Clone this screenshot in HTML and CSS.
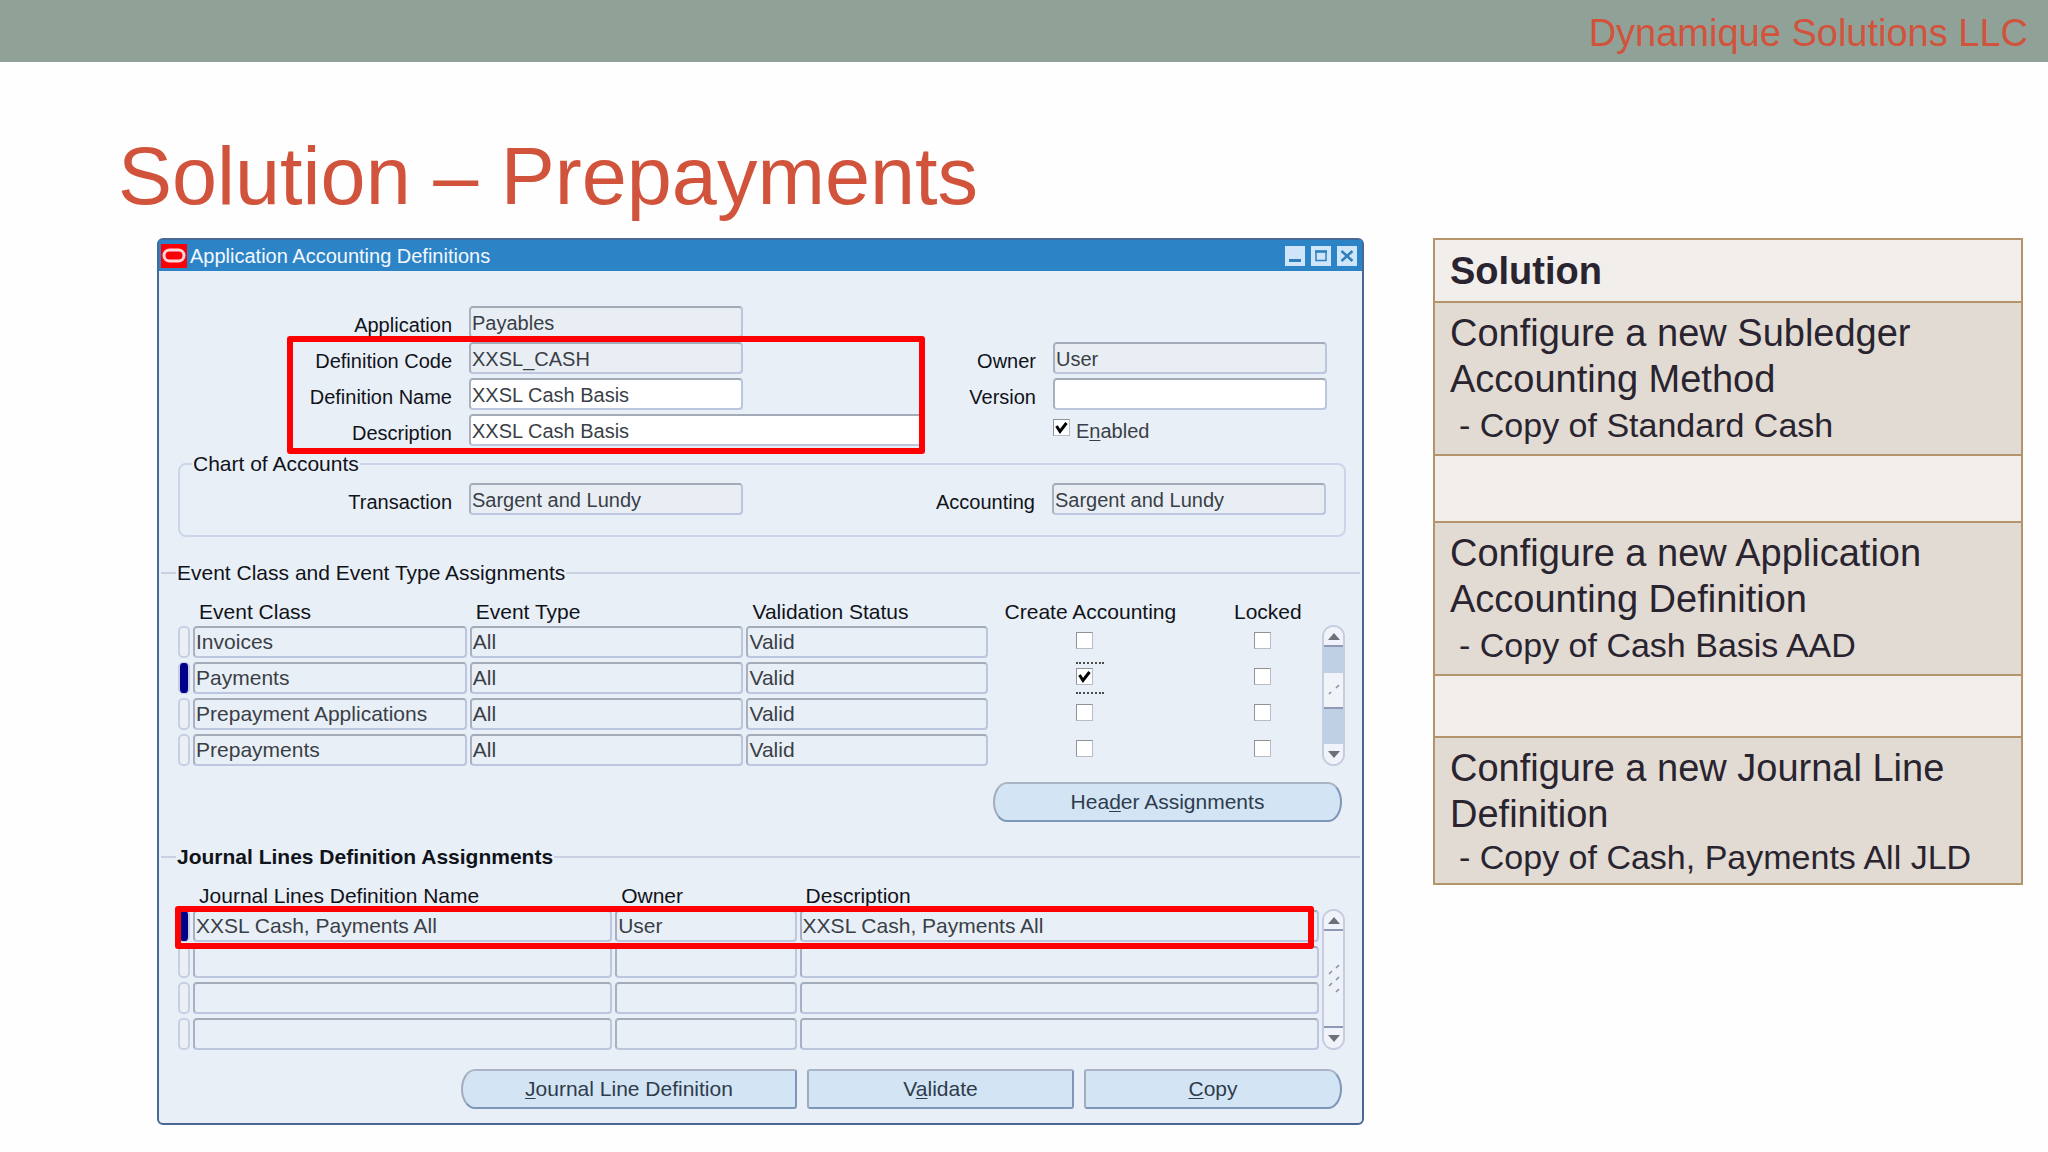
FILE: index.html
```html
<!DOCTYPE html>
<html lang="en">
<head>
<meta charset="utf-8">
<title>Solution – Prepayments</title>
<link rel="stylesheet" href="styles.css">
</head>
<body>
<header class="brand-bar">Dynamique Solutions LLC</header>
<main class="slide">
  <h1 class="slide-title">Solution – Prepayments</h1>
  <div class="columns">
    <section class="window" aria-label="Application Accounting Definitions">
      <div class="titlebar">
        <svg class="logo" viewBox="0 0 26 24" aria-hidden="true"><rect width="26" height="24" fill="#fb0007"/><rect x="3" y="6" width="20" height="11" rx="5.5" fill="none" stroke="#ffd9d9" stroke-width="3"/></svg>
        <h2 class="titlebar-text">Application Accounting Definitions</h2>
        <div class="window-controls">
          <button type="button" aria-label="Minimize"><svg viewBox="0 0 20 18"><path d="M4 13.500h12" stroke="#2f7fbd" stroke-width="3"/></svg></button>
          <button type="button" aria-label="Maximize"><svg viewBox="0 0 20 18"><rect x="5" y="4.500" width="10" height="9" fill="none" stroke="#2f7fbd" stroke-width="1.500"/><path d="M4 4.500h12" stroke="#2f7fbd" stroke-width="2.500"/></svg></button>
          <button type="button" aria-label="Close"><svg viewBox="0 0 20 18"><path d="M4.500 4l11 10M15.500 4l-11 10" stroke="#2f7fbd" stroke-width="2.500"/></svg></button>
        </div>
      </div>
      <div class="window-body">
        <div class="form">
          <div class="form-left">
            <div class="field-row"><label for="app">Application</label><input id="app" class="field" value="Payables" readonly></div>
            <div class="highlighted">
              <div class="field-row"><label for="code">Definition Code</label><input id="code" class="field" value="XXSL_CASH" readonly></div>
              <div class="field-row"><label for="name">Definition Name</label><input id="name" class="field editable" value="XXSL Cash Basis"></div>
              <div class="field-row"><label for="desc">Description</label><input id="desc" class="field editable wide" value="XXSL Cash Basis"></div>
              <div class="callout callout-form"></div>
            </div>
          </div>
          <div class="form-right">
            <div class="field-row"><label for="owner">Owner</label><input id="owner" class="field" value="User" readonly></div>
            <div class="field-row"><label for="version">Version</label><input id="version" class="field editable"></div>
            <div class="enabled-row"><input id="enabled" type="checkbox" class="check" checked><label for="enabled">E<u>n</u>abled</label></div>
          </div>
        </div>

        <fieldset class="chart">
          <legend>Chart of Accounts</legend>
          <div class="chart-fields">
            <div class="field-row"><label for="trans">Transaction</label><input id="trans" class="field" value="Sargent and Lundy" readonly></div>
            <div class="field-row field-row-right"><label for="acct">Accounting</label><input id="acct" class="field" value="Sargent and Lundy" readonly></div>
          </div>
        </fieldset>

        <h3 class="section-head">Event Class and Event Type Assignments</h3>
        <div class="grid-area grid-events">
          <div class="grid-wrap">
            <table class="grid">
              <colgroup><col class="c-sel"><col class="c-class"><col class="c-type"><col class="c-status"><col class="c-create"><col class="c-locked"></colgroup>
              <thead><tr><td></td><th>Event Class</th><th>Event Type</th><th>Validation Status</th><th class="mid create">Create Accounting</th><th class="mid">Locked</th></tr></thead>
              <tbody>
                <tr><td class="sel"></td><td class="cell">Invoices</td><td class="cell">All</td><td class="cell">Valid</td><td class="mid create"><span class="tick"><input type="checkbox" class="check" aria-label="Create accounting for Invoices"></span></td><td class="mid"><span class="tick"><input type="checkbox" class="check" aria-label="Lock Invoices"></span></td></tr>
                <tr><td class="sel current"></td><td class="cell">Payments</td><td class="cell">All</td><td class="cell">Valid</td><td class="mid create"><span class="tick focused"><input type="checkbox" class="check" aria-label="Create accounting for Payments" checked></span></td><td class="mid"><span class="tick"><input type="checkbox" class="check" aria-label="Lock Payments"></span></td></tr>
                <tr><td class="sel"></td><td class="cell">Prepayment Applications</td><td class="cell">All</td><td class="cell">Valid</td><td class="mid create"><span class="tick"><input type="checkbox" class="check" aria-label="Create accounting for Prepayment Applications"></span></td><td class="mid"><span class="tick"><input type="checkbox" class="check" aria-label="Lock Prepayment Applications"></span></td></tr>
                <tr><td class="sel"></td><td class="cell">Prepayments</td><td class="cell">All</td><td class="cell">Valid</td><td class="mid create"><span class="tick"><input type="checkbox" class="check" aria-label="Create accounting for Prepayments"></span></td><td class="mid"><span class="tick"><input type="checkbox" class="check" aria-label="Lock Prepayments"></span></td></tr>
              </tbody>
            </table>
          </div>
          <div class="scrollbar">
            <button type="button" class="arrow up" aria-label="Scroll up"><svg viewBox="0 0 12 7"><path d="M6 0l6 7H0z" fill="#6c7078"/></svg></button>
            <div class="track"><div class="thumb"><svg viewBox="0 0 14 12"><path d="M2 10l2-2M9 4l3-3" stroke="#8b8f98" stroke-width="1.500"/></svg></div></div>
            <button type="button" class="arrow down" aria-label="Scroll down"><svg viewBox="0 0 12 7"><path d="M0 0h12L6 7z" fill="#6c7078"/></svg></button>
          </div>
        </div>
        <div class="actions actions-header">
          <button type="button" class="btn round-left round-right btn-header">Hea<u>d</u>er Assignments</button>
        </div>

        <h3 class="section-head strong">Journal Lines Definition Assignments</h3>
        <div class="grid-area">
          <div class="grid-wrap">
            <table class="grid">
              <colgroup><col class="c-sel"><col class="c-name"><col class="c-owner"><col class="c-desc"></colgroup>
              <thead><tr><td></td><th>Journal Lines Definition Name</th><th>Owner</th><th>Description</th></tr></thead>
              <tbody>
                <tr><td class="sel current"></td><td class="cell">XXSL Cash, Payments All</td><td class="cell">User</td><td class="cell">XXSL Cash, Payments All</td></tr>
                <tr><td class="sel"></td><td class="cell"></td><td class="cell"></td><td class="cell"></td></tr>
                <tr><td class="sel"></td><td class="cell"></td><td class="cell"></td><td class="cell"></td></tr>
                <tr><td class="sel"></td><td class="cell"></td><td class="cell"></td><td class="cell"></td></tr>
              </tbody>
            </table>
            <div class="callout callout-row"></div>
          </div>
          <div class="scrollbar">
            <button type="button" class="arrow up" aria-label="Scroll up"><svg viewBox="0 0 12 7"><path d="M6 0l6 7H0z" fill="#6c7078"/></svg></button>
            <div class="track idle"><svg viewBox="0 0 14 30"><path d="M2 10l3-3M9 4l3-3M9 16l3-3M2 22l3-3M9 28l3-3" stroke="#8b8f98" stroke-width="1.500"/></svg></div>
            <button type="button" class="arrow down" aria-label="Scroll down"><svg viewBox="0 0 12 7"><path d="M0 0h12L6 7z" fill="#6c7078"/></svg></button>
          </div>
        </div>
        <div class="actions actions-footer">
          <button type="button" class="btn round-left btn-journal"><u>J</u>ournal Line Definition</button>
          <button type="button" class="btn btn-validate">V<u>a</u>lidate</button>
          <button type="button" class="btn round-right btn-copy"><u>C</u>opy</button>
        </div>
      </div>
    </section>

    <table class="solution">
      <thead><tr><th>Solution</th></tr></thead>
      <tbody>
        <tr class="step"><td>Configure a new Subledger Accounting Method<p>- Copy of Standard Cash</p></td></tr>
        <tr class="gap"><td></td></tr>
        <tr class="step"><td>Configure a new Application Accounting Definition<p>- Copy of Cash Basis AAD</p></td></tr>
        <tr class="gap short"><td></td></tr>
        <tr class="step last"><td>Configure a new Journal Line Definition<p>- Copy of Cash, Payments All JLD</p></td></tr>
      </tbody>
    </table>
  </div>
</main>
</body>
</html>
```
FILE: styles.css
```css
* { box-sizing: border-box; }

body {
  margin: 0;
  background: #fefefe;
  color: #29242f;
  font-family: "Liberation Sans", Arial, sans-serif;
}

h1, h2, h3, p { margin: 0; font-weight: 400; }
button { margin: 0; padding: 0; font: inherit; border: 0; }
u { text-decoration-thickness: 1px; text-underline-offset: 2px; }

.brand-bar {
  padding: 5px 20px 1px;
  background: #90a298;
  color: #d2533c;
  font-size: 38px;
  line-height: 56px;
  text-align: right;
}

.slide { padding: 69px 25px 24px 157px; }

.slide-title {
  margin: 0 0 17px -39px;
  color: #d2533c;
  font-size: 81px;
  line-height: 90px;
}

.columns {
  display: grid;
  grid-template-columns: minmax(0, 1207fr) minmax(0, 590fr);
  gap: 69px;
  align-items: start;
}

/* Application window */
.window {
  border: 2px solid #4a6896;
  border-radius: 6px;
  background: #e9eff6;
  color: #10131a;
  font-size: 21px;
  line-height: 24px;
}

.titlebar {
  display: flex;
  align-items: center;
  gap: 3px;
  height: 31px;
  padding: 1px 5px 0 2px;
  background: #2c83c6;
  color: #f2f8ff;
}

.logo { width: 26px; height: 24px; }
.titlebar-text { flex: 1; font-size: 20px; }
.window-controls { display: flex; gap: 6px; }

.window-controls button {
  width: 20px;
  height: 20px;
  background: #cfe6fa;
}

.window-controls svg { display: block; width: 20px; height: 20px; }
.window-body { padding: 35px 16px 14px 19px; }

.form { display: flex; font-size: 20px; }
.form-left { flex: 0 0 747px; }
.form-right { flex: 1; padding-top: 36px; }

.field-row {
  display: grid;
  grid-template-columns: 274px 1fr;
  column-gap: 17px;
  margin-bottom: 4px;
}

.field-row label { padding-top: 7px; text-align: right; }

.form-right .field-row { grid-template-columns: 111px 1fr; }

.field {
  width: 274px;
  height: 32px;
  padding: 2px 1px 0;
  border: 2px solid #bcc6de;
  border-top-color: #a4abb8;
  border-left-color: #a9b0c2;
  border-radius: 4px;
  background: #e9eef5;
  color: #3a3f47;
  font: inherit;
}

.field.editable { background: #fff; }
.field.wide { width: 100%; }
.highlighted { position: relative; }

.callout {
  position: absolute;
  border: 6px solid #fe0000;
  border-radius: 3px;
  pointer-events: none;
}

.callout-form { inset: -6px 0 -8px 109px; }
.callout-row { top: 24px; left: 0; right: 8px; height: 43px; }

.enabled-row {
  display: flex;
  gap: 6px;
  padding: 5px 0 0 128px;
  color: #3a3f47;
}

.check {
  appearance: none;
  width: 17px;
  height: 17px;
  margin: 0;
  border: 1px solid #b9bcc4;
  border-top-color: #8f939b;
  border-left-color: #8f939b;
  background: #fff;
}

.check:checked {
  background: #fff url("data:image/svg+xml,%3Csvg xmlns='http://www.w3.org/2000/svg' viewBox='0 0 15 15'%3E%3Cpath d='M2.500 6l3.500 5.500L12.500 3' fill='none' stroke='%23000' stroke-width='3'/%3E%3C/svg%3E") center / 15px 15px no-repeat;
}

.chart {
  min-width: 0;
  margin: 2px 0 0;
  padding: 7px 0 16px;
  border: 2px solid #cdd5ea;
  border-radius: 8px;
}

.chart legend { margin-left: 12px; padding: 0 1px; font-size: 21px; }
.chart-fields { display: grid; grid-template-columns: 744px 1fr; font-size: 20px; }
.chart-fields .field-row { grid-template-columns: 272px 1fr; }
.chart-fields .field-row-right { grid-template-columns: 111px 1fr; }

.section-head {
  display: flex;
  align-items: center;
  gap: 1px;
  margin: 24px -14px 13px -17px;
  font-size: 21px;
}

.section-head::before,
.section-head::after {
  content: "";
  width: 15px;
  height: 2px;
  background: #c9d1e2;
}

.section-head::after { flex: 1; }
.section-head.strong { margin-top: 23px; font-weight: 700; }

.grid-area { display: flex; align-items: flex-end; margin: 0 1px 0 -3px; }
.grid-events { gap: 4px; }
.grid-wrap { position: relative; flex: 1; }

.grid {
  width: 100%;
  table-layout: fixed;
  border-spacing: 3px 4px;
}

.c-sel { width: 12px; }
.c-class, .c-type { width: 273px; }
.c-status { width: 241px; }
.c-create { width: 226px; }
.c-locked { width: 94px; }
.c-name { width: 418px; }
.c-owner { width: 181px; }
.c-desc { width: 518px; }

.grid td { height: 32px; padding: 0; }
.grid thead td { height: 20px; }

.grid th {
  padding: 0 0 0 6px;
  font-weight: 400;
  line-height: 20px;
  text-align: left;
  white-space: nowrap;
}

.grid .mid { padding: 0; text-align: center; }
.grid .create { padding-right: 28px; }

.grid .cell {
  padding: 0 1px;
  border: 2px solid #bcc6de;
  border-top-color: #a4abb8;
  border-left-color: #a9b0c2;
  border-radius: 4px;
  color: #3a3f47;
  line-height: 24px;
  white-space: nowrap;
}

.sel {
  border: 2px solid #c6cfe4;
  border-radius: 5px;
  background: #eceff4;
}

.sel.current { border-color: #c6cfe4; background: #00008b; border-width: 1px 2px; }

.tick {
  display: flex;
  width: 28px;
  height: 32px;
  margin: 0 auto;
  padding-top: 6px;
}

.tick.focused {
  border-top: 2px dotted #4c4c4c;
  border-bottom: 2px dotted #4c4c4c;
  padding-top: 4px;
}

.scrollbar {
  display: flex;
  flex-direction: column;
  width: 23px;
  height: 141px;
  margin-bottom: 4px;
  overflow: hidden;
  border: 2px solid #c6cde0;
  border-radius: 12px;
  background: #edf1f8;
}

.arrow {
  display: flex;
  flex: 0 0 20px;
  align-items: center;
  justify-content: center;
  background: #f0f3f9;
}

.arrow svg { width: 12px; height: 7px; }
.arrow.up { border-bottom: 2px solid #8f98b5; }
.track { flex: 1; padding-top: 26px; background: #bfcfe4; }

.thumb {
  display: flex;
  align-items: center;
  justify-content: center;
  height: 36px;
  border-bottom: 2px solid #8f98b5;
  background: #f0f3f8;
}

.thumb svg { width: 14px; height: 12px; }

.track.idle {
  display: flex;
  align-items: center;
  justify-content: center;
  padding: 0;
  border-bottom: 2px solid #8f98b5;
  background: #edf1f8;
}

.track.idle svg { width: 14px; height: 30px; }
.actions { display: flex; justify-content: flex-end; padding-right: 4px; }
.actions-header { margin-top: 12px; }
.actions-footer { gap: 10px; margin-top: 15px; }

.btn {
  height: 40px;
  border: 2px solid #7e96b8;
  border-top-color: #a9b4c4;
  border-left-color: #a2acbc;
  border-radius: 3px;
  background: #d3e4f5;
  color: #2f3c4b;
}

.round-left { border-top-left-radius: 14px 20px; border-bottom-left-radius: 14px 20px; }
.round-right { border-top-right-radius: 14px 20px; border-bottom-right-radius: 14px 20px; }
.btn-header { width: 349px; }
.btn-journal { width: 336px; }
.btn-validate { width: 267px; }
.btn-copy { width: 258px; }

/* Solution summary */
.solution {
  width: 100%;
  border-collapse: collapse;
  font-size: 38px;
  line-height: 46px;
}

.solution th,
.solution td {
  padding: 7px 15px 6px;
  border: 2px solid #b4956b;
  background: #f2eeeb;
  text-align: left;
}

.solution th { padding: 8px 15px 7px; }
.solution .step td { background: #e2dbd3; }
.solution p { padding-left: 9px; font-size: 34px; }
.solution .gap td { height: 67px; padding: 0; }
.solution .gap.short td { height: 62px; }
.solution .last p { line-height: 40px; }
```
